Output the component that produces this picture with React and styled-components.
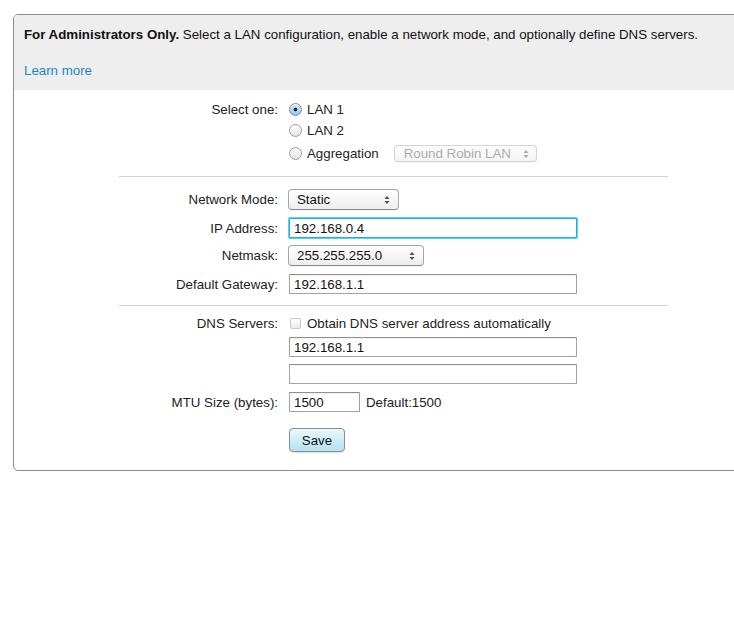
import styled, { createGlobalStyle } from 'styled-components';

const GlobalStyle = createGlobalStyle`
  html, body {
    margin: 0;
    padding: 0;
    background: #fff;
    overflow: hidden;
  }
  body {
    font-family: "Liberation Sans", Arial, Helvetica, sans-serif;
    font-size: 13.3px;
    color: #222;
  }
`;

const Panel = styled.section`
  margin: 14px 0 0 13px;
  width: 740px;
  border: 1px solid #8c8c8c;
  border-radius: 5px;
  overflow: hidden;
`;

const Intro = styled.header`
  background: #eeeeee;
  padding: 12px 10px 11px;
  line-height: 16px;
`;

const IntroText = styled.p`
  margin: 0 0 20px;
  color: #111;

  strong {
    font-weight: bold;
  }
`;

const LearnMore = styled.a`
  color: #1a86d4;
  text-decoration: none;
`;

const Form = styled.form`
  margin-left: 105px;
  width: 549px;
  padding: 9px 0 18px;
`;

const Row = styled.div`
  display: grid;
  grid-template-columns: 159px 1fr;
  column-gap: 10px;
  align-items: center;
  min-height: ${(p) => p.$h || 20}px;
  margin-top: ${(p) => p.$mt || 0}px;
`;

const Label = styled.label`
  text-align: right;
  color: #222;
  white-space: nowrap;
`;

const Controls = styled.div`
  display: flex;
  align-items: center;
`;

const Divider = styled.hr`
  border: 0;
  height: 1px;
  background: #d3d3d3;
  margin: ${(p) => p.$mt || 0}px 0 0;
`;

const Radio = styled.input.attrs({ type: 'radio' })`
  appearance: none;
  width: 13px;
  height: 13px;
  margin: 0 5px 0 1px;
  border-radius: 50%;
  border: 1px solid #9c9c9c;
  background: linear-gradient(#ffffff, #e4e4e4);
  box-shadow: inset 0 1px 0 #fff;

  &:checked {
    border-color: #6e8fb3;
    background: radial-gradient(circle, #1b2633 0 1.6px, transparent 2.2px),
      linear-gradient(#d9e9f8, #9cc3ea);
  }
`;

const Checkbox = styled.input.attrs({ type: 'checkbox' })`
  appearance: none;
  width: 11px;
  height: 11px;
  margin: 0 6px 0 2px;
  border: 1px solid #c9c9c9;
  border-radius: 2px;
  background: linear-gradient(#fdfdfd, #ececec);
`;

const OptionText = styled.span`
  color: #222;
`;

const SelectWrap = styled.span`
  position: relative;
  display: inline-flex;
  margin-left: ${(p) => p.$ml || 0}px;
`;

const Select = styled.select`
  appearance: none;
  width: ${(p) => p.$w}px;
  height: ${(p) => p.$h || 21}px;
  padding: 0 0 0 ${(p) => p.$pl || 8}px;
  font-family: inherit;
  font-size: 13.3px;
  color: ${(p) => (p.disabled ? '#8a8a8a' : '#111')};
  border: 1px solid ${(p) => (p.disabled ? '#c6c6c6' : '#a6a6a6')};
  border-bottom-color: ${(p) => (p.disabled ? '#bdbdbd' : '#8e8e8e')};
  border-radius: 4px;
  background: ${(p) =>
    p.disabled
      ? 'linear-gradient(#fbfbfb, #f1f1f1)'
      : 'linear-gradient(#ffffff, #ededed)'};
  box-shadow: 0 1px 1px rgba(0, 0, 0, 0.06);
  outline: none;
`;

const Arrows = styled.svg`
  position: absolute;
  right: ${(p) => p.$r || 9}px;
  top: 50%;
  transform: translateY(-50%);
  pointer-events: none;
`;

const TextInput = styled.input`
  box-sizing: border-box;
  width: ${(p) => p.$w || 288}px;
  height: 20px;
  margin-left: 1px;
  padding: 0 4px;
  font-family: inherit;
  font-size: 13.3px;
  color: #111;
  border: 1px solid ${(p) => (p.$focus ? '#17b6d9' : '#a3a3a3')};
  border-top-color: ${(p) => (p.$focus ? '#17b6d9' : '#8f8f8f')};
  box-shadow: ${(p) => (p.$focus ? '0 0 0 1px #5fd0e8' : 'inset 0 1px 1px rgba(0,0,0,0.05)')};
  border-radius: 1px;
  outline: none;
`;

const Hint = styled.span`
  margin-left: 6px;
  color: #222;
`;

const SaveButton = styled.button`
  width: 56px;
  height: 24px;
  margin-left: 1px;
  font-family: inherit;
  font-size: 13.3px;
  color: #111;
  border: 1px solid #8d8d8d;
  border-radius: 4px;
  background: linear-gradient(#eaf8fc, #cdeef7 50%, #b3e2ef);
  box-shadow: 0 1px 1px rgba(0, 0, 0, 0.12);
  cursor: pointer;
`;

const Updown = ({ color = '#4d4d4d', right }) => (
  <Arrows $r={right} width="6" height="9" viewBox="0 0 6 9">
    <path d="M3 0.5 L5.5 3.5 H0.5 Z" fill={color} />
    <path d="M3 8.5 L5.5 5.5 H0.5 Z" fill={color} />
  </Arrows>
);

const Dropdown = ({ value, options, width, height, disabled, ml, pl, right }) => (
  <SelectWrap $ml={ml}>
    <Select $w={width} $h={height} $pl={pl} disabled={disabled} defaultValue={value}>
      {options.map((o) => (
        <option key={o}>{o}</option>
      ))}
    </Select>
    <Updown color={disabled ? '#a8a8a8' : '#4d4d4d'} right={right} />
  </SelectWrap>
);

const App = () => {
  return (
    <>
      <GlobalStyle />
      <Panel>
        <Intro>
          <IntroText>
            <strong>For Administrators Only.</strong> Select a LAN configuration, enable a
            network mode, and optionally define DNS servers.
          </IntroText>
          <LearnMore href="#">Learn more</LearnMore>
        </Intro>

        <Form onSubmit={(e) => e.preventDefault()}>
          <Row $h={21}>
            <Label>Select one:</Label>
            <Controls>
              <Radio name="lan" defaultChecked />
              <OptionText>LAN 1</OptionText>
            </Controls>
          </Row>
          <Row $h={21}>
            <span />
            <Controls>
              <Radio name="lan" />
              <OptionText>LAN 2</OptionText>
            </Controls>
          </Row>
          <Row $h={25}>
            <span />
            <Controls>
              <Radio name="lan" />
              <OptionText>Aggregation</OptionText>
              <Dropdown
                value="Round Robin LAN"
                options={['Round Robin LAN', 'Failover']}
                width={143}
                height={17}
                ml={15}
                pl={9}
                right={8}
                disabled
              />
            </Controls>
          </Row>

          <Divider $mt={10} />

          <Row $h={21} $mt={12}>
            <Label>Network Mode:</Label>
            <Controls>
              <Dropdown value="Static" options={['Static', 'DHCP']} width={111} />
            </Controls>
          </Row>
          <Row $mt={8}>
            <Label>IP Address:</Label>
            <Controls>
              <TextInput defaultValue="192.168.0.4" $focus />
            </Controls>
          </Row>
          <Row $h={21} $mt={7}>
            <Label>Netmask:</Label>
            <Controls>
              <Dropdown
                value="255.255.255.0"
                options={['255.255.255.0', '255.255.0.0', '255.0.0.0']}
                width={136}
              />
            </Controls>
          </Row>
          <Row $mt={8}>
            <Label>Default Gateway:</Label>
            <Controls>
              <TextInput defaultValue="192.168.1.1" />
            </Controls>
          </Row>

          <Divider $mt={11} />

          <Row $h={16} $mt={9}>
            <Label>DNS Servers:</Label>
            <Controls>
              <Checkbox disabled />
              <OptionText>Obtain DNS server address automatically</OptionText>
            </Controls>
          </Row>
          <Row $mt={6}>
            <span />
            <Controls>
              <TextInput defaultValue="192.168.1.1" />
            </Controls>
          </Row>
          <Row $mt={7}>
            <span />
            <Controls>
              <TextInput defaultValue="" />
            </Controls>
          </Row>
          <Row $mt={8}>
            <Label>MTU Size (bytes):</Label>
            <Controls>
              <TextInput defaultValue="1500" $w={71} />
              <Hint>Default:1500</Hint>
            </Controls>
          </Row>
          <Row $h={24} $mt={16}>
            <span />
            <Controls>
              <SaveButton type="submit">Save</SaveButton>
            </Controls>
          </Row>
        </Form>
      </Panel>
    </>
  );
};

export default App;
